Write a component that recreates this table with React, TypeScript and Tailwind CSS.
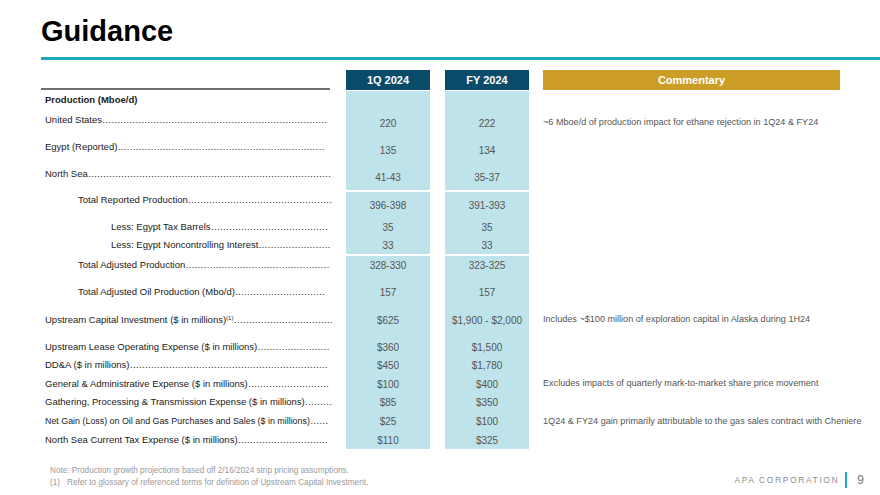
import React from 'react';

type Row = {
  label?: string;
  sup?: boolean;
  v1?: string;
  v2?: string;
  note?: string;
  h: string;
  indent?: 'none' | 'one' | 'two';
  shift?: string;
  bold?: boolean;
  small?: boolean;
  gap?: boolean;
};

const rows: Row[] = [
  { label: 'Production (Mboe/d)', h: 'h-[19px]', bold: true },
  { label: 'United States', v1: '220', v2: '222', note: '~6 Mboe/d of production impact for ethane rejection in 1Q24 & FY24', h: 'h-[26px]', shift: 'pb-[6px]' },
  { label: 'Egypt (Reported)', v1: '135', v2: '134', h: 'h-[28px]', shift: 'pb-[6px]' },
  { label: 'North Sea', v1: '41-43', v2: '35-37', h: 'h-[26px]', shift: 'pb-[6px]' },
  { gap: true, h: 'h-[2px]' },
  { label: 'Total Reported Production', v1: '396-398', v2: '391-393', h: 'h-[26px]', indent: 'one', shift: 'pb-[10px]' },
  { label: 'Less: Egypt Tax Barrels', v1: '35', v2: '35', h: 'h-[18px]', indent: 'two' },
  { label: 'Less: Egypt Noncontrolling Interest', v1: '33', v2: '33', h: 'h-[18px]', indent: 'two' },
  { gap: true, h: 'h-[2px]' },
  { label: 'Total Adjusted Production', v1: '328-330', v2: '323-325', h: 'h-[18px]', indent: 'one' },
  { h: 'h-[9px]' },
  { label: 'Total Adjusted Oil Production (Mbo/d)', v1: '157', v2: '157', h: 'h-[18px]', indent: 'one' },
  { h: 'h-[10px]' },
  {
    label: 'Upstream Capital Investment ($ in millions)',
    sup: true,
    v1: '$625',
    v2: '$1,900 - $2,000',
    note: 'Includes ~$100 million of exploration capital in Alaska during 1H24',
    h: 'h-[18px]',
  },
  { h: 'h-[9px]' },
  { label: 'Upstream Lease Operating Expense ($ in millions)', v1: '$360', v2: '$1,500', h: 'h-[18px]' },
  { label: 'DD&A ($ in millions)', v1: '$450', v2: '$1,780', h: 'h-[19px]' },
  { label: 'General & Administrative Expense ($ in millions)', v1: '$100', v2: '$400', note: 'Excludes impacts of quarterly mark-to-market share price movement', h: 'h-[18px]' },
  { label: 'Gathering, Processing & Transmission Expense ($ in millions)', v1: '$85', v2: '$350', h: 'h-[19px]' },
  { label: 'Net Gain (Loss) on Oil and Gas Purchases and Sales ($ in millions)', v1: '$25', v2: '$100', note: '1Q24 & FY24 gain primarily attributable to the gas sales contract with Cheniere', h: 'h-[19px]', small: true },
  { label: 'North Sea Current Tax Expense ($ in millions)', v1: '$110', v2: '$325', h: 'h-[18px]' },
];

let ctx: CanvasRenderingContext2D | null = null;
const measure = (text: string, size: number) => {
  if (!ctx) ctx = document.createElement('canvas').getContext('2d');
  if (!ctx) return text.length * size * 0.5;
  ctx.font = `${size}px "Liberation Sans"`;
  return ctx.measureText(text).width;
};

// leader dots: fill what is left of the label column up to its right edge
const leader = (row: Row) => {
  const pad = row.indent === 'one' ? 37 : row.indent === 'two' ? 70 : 4;
  const avail = 289 - pad - 2;
  let used = measure(row.label ?? '', row.small ? 8.9 : 9.5);
  if (row.sup) used += measure('(1)', 6);
  const dot = measure('…', 9.5) - 0.5;
  const n = Math.max(0, Math.round((avail - used) / dot));
  return '…'.repeat(n);
};

const TableRow = ({ row }: { row: Row }) => {
  if (row.gap) {
    return <div className={`${row.h} bg-white`} />;
  }
  const indent = row.indent === 'one' ? 'pl-[37px]' : row.indent === 'two' ? 'pl-[70px]' : 'pl-[4px]';
  return (
    <div className={`flex ${row.h}`}>
      <div className={`w-[289px] flex items-center ${indent} ${row.shift ?? ''}`}>
        {row.label && (
          <>
            <span
              className={`shrink-0 whitespace-nowrap text-[#1a1a1a] ${
                row.bold ? 'font-bold text-[9.5px]' : row.small ? 'text-[8.9px]' : 'text-[9.5px]'
              }`}
            >
              {row.label}
              {row.sup && <sup className="text-[6px]">(1)</sup>}
            </span>
            {!row.bold && (
              <span className="whitespace-nowrap text-[9.5px] text-[#1a1a1a] tracking-[-0.5px]">
                {leader(row)}
              </span>
            )}
          </>
        )}
      </div>
      <div className="ml-[16px] w-[84px] bg-[#bfe3ea] flex items-center justify-center text-[10px] text-[#555]">
        {row.v1}
      </div>
      <div className="ml-[15px] w-[84px] bg-[#bfe3ea] flex items-center justify-center text-[10px] text-[#555]">
        {row.v2}
      </div>
      <div className="ml-[14px] w-[297px] flex items-center text-[9.1px] text-[#555] whitespace-nowrap">
        {row.note}
      </div>
    </div>
  );
};

export default function App() {
  return (
    <div className="w-[880px] h-[495px] bg-white overflow-hidden font-['Liberation_Sans',Arial,sans-serif]">
      <div className="pt-[17px] pl-[41px]">
        <h1 className="text-[29px] leading-[29px] font-bold text-black">Guidance</h1>
      </div>
      <div className="mt-[11px] ml-[41px] h-[3px] bg-[#1fa8b8]" />

      <div className="mt-[10px] pl-[41px]">
        <div className="flex h-[20px]">
          <div className="w-[289px] border-b-2 border-[#707070]" />
          <div className="ml-[16px] w-[84px] bg-[#0b4b6a] flex items-center justify-center text-white font-bold text-[11px]">
            1Q 2024
          </div>
          <div className="ml-[15px] w-[84px] bg-[#0b4b6a] flex items-center justify-center text-white font-bold text-[11px]">
            FY 2024
          </div>
          <div className="ml-[14px] w-[297px] bg-[#cc9d27] flex items-center justify-center text-white font-bold text-[11px]">
            Commentary
          </div>
        </div>
        <div className="h-[1px]" />
        {rows.map((r, i) => (
          <TableRow key={i} row={r} />
        ))}
      </div>

      <div className="mt-[16px] flex justify-between">
        <div className="pl-[50px] text-[8.2px] leading-[12px] text-[#9a9a9a]">
          <div>Note: Production growth projections based off 2/16/2024 strip pricing assumptions.</div>
          <div className="flex">
            <span className="w-[17px]">(1)</span>
            <span>Refer to glossary of referenced terms for definition of Upstream Capital Investment.</span>
          </div>
        </div>
        <div className="mt-[7px] pr-[16px] flex items-center h-[16px]">
          <span className="text-[8.5px] tracking-[1.6px] text-[#8c8c8c]">APA CORPORATION</span>
          <span className="ml-[6px] w-[2px] h-[16px] bg-[#1fa8b8]" />
          <span className="ml-[10px] text-[12px] text-[#7a7a7a]">9</span>
        </div>
      </div>
    </div>
  );
}
